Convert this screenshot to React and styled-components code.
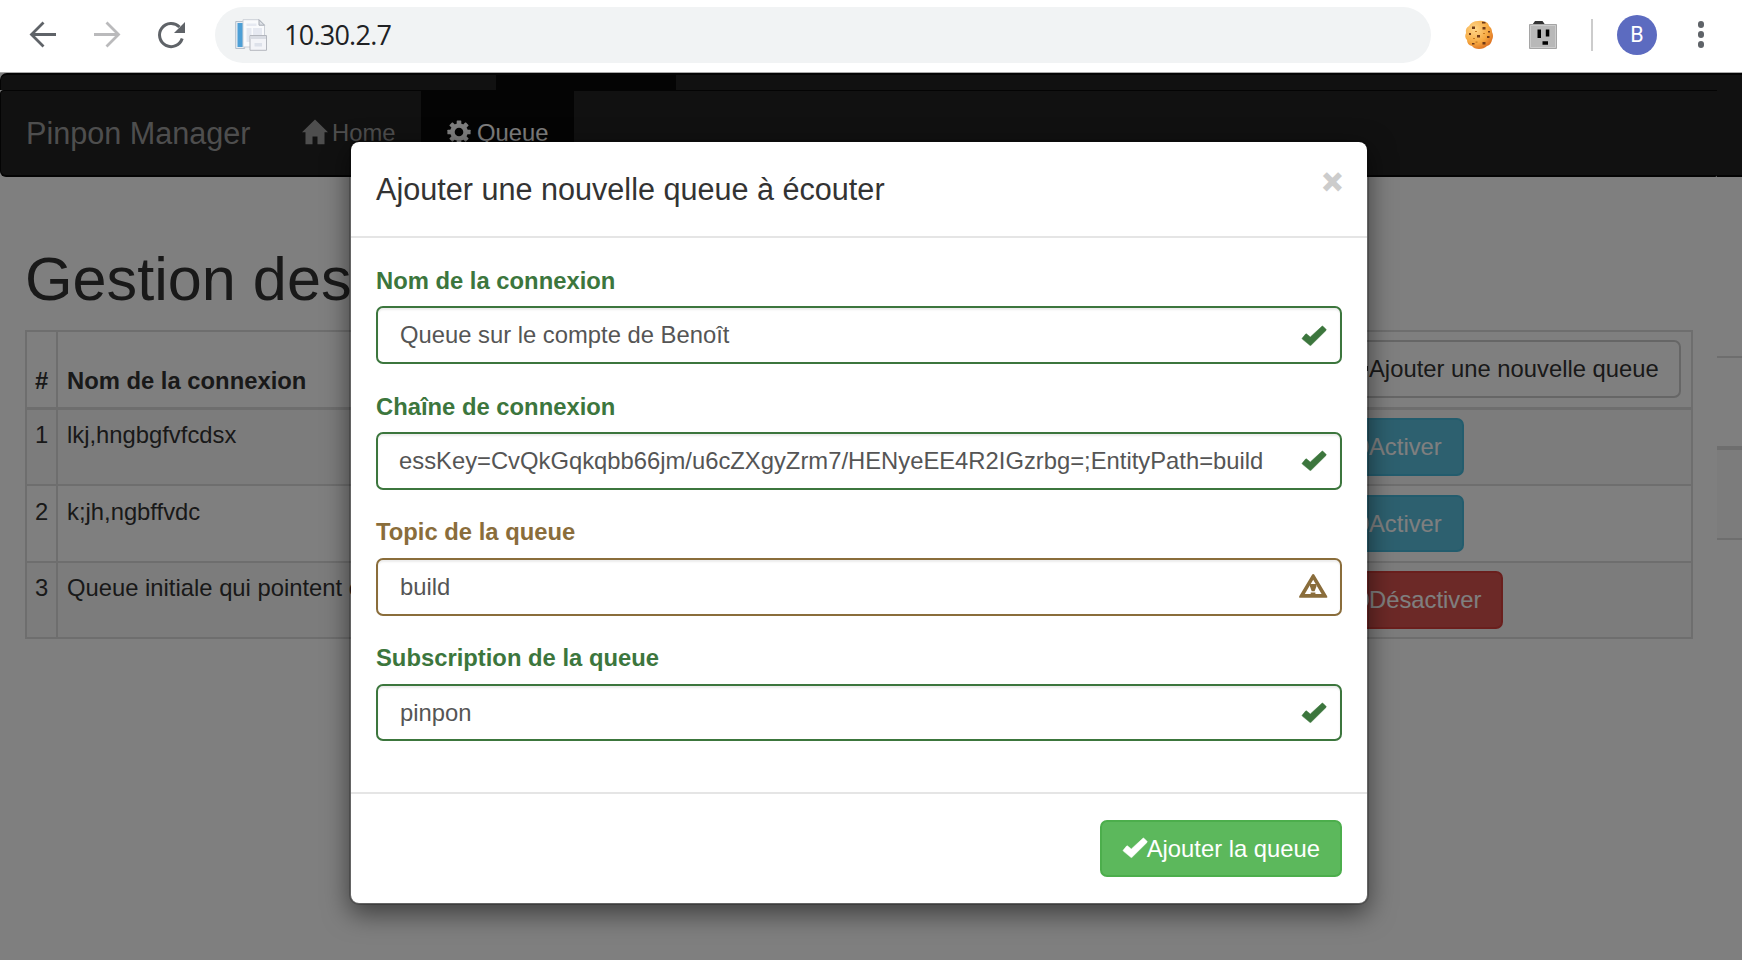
import React from "react";
import styled, { createGlobalStyle } from "styled-components";

const GlobalStyle = createGlobalStyle`
  *, *::before, *::after { box-sizing: border-box; }
  body {
    margin: 0;
    overflow: hidden;
    background: #fff;
    color: #333;
    font-family: "Liberation Sans", Arial, sans-serif;
    font-size: 23.8px;
    line-height: 34px;
  }
`;

/* ---------- browser toolbar ---------- */
const Window = styled.div`
  width: 1742px;
  height: 960px;
  display: flex;
  flex-direction: column;
  overflow: hidden;
`;
const Toolbar = styled.header`
  height: 73px;
  flex: none;
  display: flex;
  align-items: center;
  padding: 0 36px 3px 28px;
  border-bottom: 1px solid #a9a9a9;
`;
const NavIcon = styled.svg`
  width: 30px;
  height: 30px;
  flex: none;
  margin-right: 34px;
  color: ${(p) => (p.$muted ? "#bababc" : "#5f6368")};
`;
const AddressBar = styled.div`
  width: 1216px;
  height: 56px;
  margin-left: -5px;
  border-radius: 28px;
  background: #f1f3f4;
  display: flex;
  align-items: center;
  padding-left: 20px;
`;
const Favicon = styled.svg`
  width: 32px;
  height: 32px;
  margin-right: 17px;
`;
const Url = styled.span`
  font-family: "Open Sans", sans-serif;
  font-size: 27px;
  letter-spacing: -0.75px;
  color: #202124;
`;
const Extension = styled.svg`
  width: 30px;
  height: 30px;
  flex: none;
  margin-left: ${(p) => p.$gap}px;
`;
const Divider = styled.span`
  width: 2px;
  height: 32px;
  margin: 0 24px 0 33px;
  background: #ccc;
`;
const Avatar = styled.span`
  width: 40px;
  height: 40px;
  border-radius: 50%;
  background: #5c6bc0;
  color: #fff;
  display: flex;
  align-items: center;
  justify-content: center;
  font-family: Roboto, sans-serif;
  font-size: 21.5px;
`;
const Dots = styled.div`
  margin-left: auto;
  width: 10px;
  display: flex;
  flex-direction: column;
  align-items: center;
  gap: 3.6px;
  i { width: 6.4px; height: 6.4px; border-radius: 50%; background: #5f6368; }
`;

/* ---------- page ---------- */
const Viewport = styled.main`
  position: relative;
  flex: 1;
  display: flex;
  flex-direction: column;
`;
const TopStrip = styled.div`
  height: 17px;
  flex: none;
  display: flex;
  background: #222;
  border-top: 2px solid #080808;
  border-left: 1px solid #080808;
  border-radius: 7px 0 0 0;
  padding-left: 495px;
`;
const StripActive = styled.span`
  width: 180px;
  background: #080808;
`;
const Columns = styled.div`
  flex: 1;
  display: flex;
`;
const Main = styled.div`
  width: 1717px;
`;
const Aside = styled.div`
  flex: 1;
`;
const Navbar = styled.nav`
  height: 87px;
  display: flex;
  background: #222;
  border: 1px solid #080808;
  border-width: 1px 0 2px 1px;
  border-radius: 4px 0 2px 6px;
  color: #9d9d9d;
  padding-left: 25px;
`;
const Brand = styled.span`
  width: 250px;
  font-size: 30.6px;
  line-height: 84px;
`;
const NavItem = styled.a`
  width: ${(p) => p.$width}px;
  height: 84px;
  padding-left: ${(p) => p.$inset}px;
  display: flex;
  align-items: center;
  gap: ${(p) => p.$gap}px;
  background: ${(p) => (p.$active ? "#080808" : "transparent")};
  color: ${(p) => (p.$active ? "#fff" : "#9d9d9d")};
`;
const Glyph = styled.svg`
  width: 24px;
  height: 24px;
  flex: none;
  overflow: visible;
  fill: currentColor;
`;
const Content = styled.section`
  padding: 69px 24px 0 25px;
`;
const Heading = styled.h1`
  margin: 0 0 17px;
  font-size: 61.2px;
  font-weight: normal;
  line-height: 67px;
`;
const Table = styled.div`
  border: 2px solid #ddd;
`;
const Row = styled.div`
  display: grid;
  grid-template-columns: 31px 1256px 1fr;
  height: ${(p) => p.$height}px;
  background: ${(p) => (p.$striped ? "#f9f9f9" : "#fff")};
  border-bottom: ${(p) => p.$rule}px solid #ddd;
  font-weight: ${(p) => (p.$head ? "bold" : "normal")};
`;
const Cell = styled.div`
  padding: ${(p) => p.$top || 8}px 9px ${(p) => (p.$bottom ? 9 : 8)}px;
  white-space: nowrap;
  border-right: ${(p) => (p.$last ? 0 : 2)}px solid #ddd;
  align-self: stretch;
  display: flex;
  align-items: ${(p) => (p.$bottom ? "flex-end" : "flex-start")};
  &:first-child { padding-left: 8px; }
`;
const palettes = {
  default: ["#fff", "#ccc", "#333"],
  info: ["#5bc0de", "#46b8da", "#fff"],
  danger: ["#d9534f", "#d43f3a", "#fff"],
  success: ["#5cb85c", "#4cae4c", "#fff"],
};
const Button = styled.button`
  height: ${(p) => p.$height || 58}px;
  margin: 0;
  padding: 0 20px;
  display: flex;
  align-items: center;
  border: 2px solid ${(p) => palettes[p.$kind][1]};
  border-radius: 7px;
  background: ${(p) => palettes[p.$kind][0]};
  color: ${(p) => palettes[p.$kind][2]};
  font: inherit;
  font-weight: normal;
  white-space: nowrap;
`;
const AsideNav = styled.div`
  height: 87px;
  background: #222;
  border-bottom: 2px solid #080808;
`;
const AsideHead = styled.div`
  height: 92px;
  margin-top: 179px;
  border-top: 2px solid #ddd;
`;
const AsideRow = styled.div`
  height: 94px;
  margin-top: -2px;
  background: #f9f9f9;
  border-top: 4px solid #ddd;
  border-bottom: 2px solid #ddd;
`;
const Backdrop = styled.div`
  position: absolute;
  inset: 0;
  padding: 67px 0 0 349px;
  background: rgba(0, 0, 0, 0.5);
`;

/* ---------- modal ---------- */
const Dialog = styled.div`
  width: 1020px;
  height: 765px;
  display: flex;
  flex-direction: column;
  border: 2px solid rgba(0, 0, 0, 0.2);
  border-radius: 10px;
  background: #fff;
  background-clip: padding-box;
  box-shadow: 0 8.5px 25.5px rgba(0, 0, 0, 0.5);
`;
const DialogHeader = styled.div`
  height: 96px;
  display: flex;
  justify-content: space-between;
  padding: 25px 25px 0;
  border-bottom: 2px solid #e5e5e5;
`;
const Title = styled.h4`
  margin: 0;
  font-size: 30.6px;
  font-weight: normal;
  line-height: 44px;
`;
const Close = styled.span`
  font-size: 33px;
  font-weight: bold;
  line-height: 29px;
  color: #ccc;
  -webkit-text-stroke: 1.8px #ccc;
`;
const DialogBody = styled.div`
  flex: 1;
  padding: 26px 25px 0;
`;
const tones = { success: "#3c763d", warning: "#8a6d3b" };
const Label = styled.label`
  display: block;
  margin-bottom: 8px;
  font-weight: bold;
`;
const Control = styled.div`
  height: 58px;
  display: flex;
  align-items: center;
  justify-content: space-between;
  padding: 0 14px 0 ${(p) => p.$inset}px;
  border: 2px solid currentColor;
  border-radius: 7px;
  box-shadow: inset 0 2px 2px rgba(0, 0, 0, 0.075);
`;
const Field = styled.div`
  margin-bottom: 26px;
  color: ${(p) => tones[p.$tone]};
  &:nth-child(n + 3) { margin-top: -1px; }
  &:nth-child(n + 3) ${Label} { margin-bottom: 9px; }
  &:first-child ${Glyph} { margin-top: 2px; }
  &:last-child ${Control} { height: 57px; }
`;
const Value = styled.span`
  color: #555;
  white-space: nowrap;
`;
const DialogFooter = styled.div`
  height: 111px;
  display: flex;
  justify-content: flex-end;
  align-items: flex-start;
  padding: 26px 25px 0;
  border-top: 2px solid #e5e5e5;
  ${Glyph} { margin: -2px 0 0 1px; }
`;

const Check = () => (
  <Glyph viewBox="0 0 24 24">
    <path d="M.3 14.100 3.600 10.100q.5-.6 1.100-.1L8.300 13 19.900 2.300q.6-.5 1.100 0l3 3q.5.6 0 1.100L9 21.300q-.6.5-1.200 0L.3 15.100q-.5-.5 0-1z" stroke="currentColor" strokeWidth=".5" />
  </Glyph>
);
const Warning = () => (
  <Glyph viewBox="0 0 24 24">
    <g transform="translate(-.8 -.8)">
      <path
        fillRule="evenodd"
        d="M12-.3q.7 0 1 .7L26 22q.6 1.500-.7 1.500H-1.300Q-2.600 23.500-2 22L11 .4q.3-.7 1-.7zM12 5.500 3.600 19.800h5.900v-1.600h4.700v1.600h6.200z"
      />
      <path d="M8.800 9.800h6.400v2.500L13.400 17h-2.900L8.800 12.300z" />
    </g>
  </Glyph>
);
const House = () => (
  <Glyph viewBox="0 0 24 24">
    <path d="M12-1.500 25 11.300H21.500V23.300H14.500V15.500H9.500V23.300H2.500V11.300H-1z" />
  </Glyph>
);
const Cog = () => (
  <Glyph viewBox="0 0 24 24">
    <mask id="hub" maskUnits="userSpaceOnUse" x="-2" y="-2" width="28" height="28">
      <rect x="-2" y="-2" width="28" height="28" fill="#fff" />
      <circle cx="12" cy="11" r="4.300" fill="#000" />
    </mask>
    <g mask="url(#hub)">
      <circle cx="12" cy="11" r="8.800" />
      {[0, 45, 90, 135].map((a) => (
        <rect key={a} x="9.700" y="-.6" width="4.600" height="23.200" rx=".6" transform={`rotate(${a} 12 11)`} />
      ))}
    </g>
  </Glyph>
);
const Ring = () => (
  <Glyph viewBox="0 0 24 24">
    <circle cx="11.700" cy="11.500" r="10.600" fill="none" stroke="currentColor" strokeWidth="3" />
  </Glyph>
);
const Plus = () => (
  <Glyph viewBox="0 0 24 24">
    <path d="M9 2h5v7h9v5h-9v8H9v-8H1V9h8z" />
  </Glyph>
);

const rows = [
  { id: 1, name: "lkj,hngbgfvfcdsx", action: "Activer", kind: "info", height: 76, rule: 2, top: 8 },
  { id: 2, name: "k;jh,ngbffvdc", action: "Activer", kind: "info", height: 77, rule: 2, top: 9, button: 57 },
  { id: 3, name: "Queue initiale qui pointent c", action: "Désactiver", kind: "danger", height: 74, rule: 0, top: 8 },
];
const fields = [
  { label: "Nom de la connexion", value: "Queue sur le compte de Benoît", tone: "success" },
  {
    label: "Chaîne de connexion",
    value: "essKey=CvQkGqkqbb66jm/u6cZXgyZrm7/HENyeEE4R2IGzrbg=;EntityPath=build",
    tone: "success",
  },
  { label: "Topic de la queue", value: "build", tone: "warning" },
  { label: "Subscription de la queue", value: "pinpon", tone: "success" },
];

function BrowserToolbar() {
  return (
    <Toolbar>
      <NavIcon viewBox="0 0 30 30" fill="none" stroke="currentColor" strokeWidth="2.8">
        <path d="M28 14.500H4M15.500 2.500l-12 12 12 12" />
      </NavIcon>
      <NavIcon $muted viewBox="0 0 30 30" fill="none" stroke="currentColor" strokeWidth="2.8">
        <path d="M2 14.500h24M14.500 2.500l12 12-12 12" />
      </NavIcon>
      <NavIcon viewBox="0 0 30 30" fill="none" stroke="currentColor" strokeWidth="3">
        <path d="M26.200 18.500A11.600 11.600 0 1 1 23.500 7" />
        <path d="M29 2v11H18z" fill="currentColor" stroke="none" />
      </NavIcon>
      <AddressBar>
        <Favicon viewBox="0 0 32 32">
          <path d="M.7 2.500h9v27h-9z" fill="#e8edf3" stroke="#b4bfcb" />
          <path d="M2.500 4h5.500v24H2.500z" fill="#4d9fd6" />
          <path d="M8 .7h16l5.500 5.500V28H8z" fill="#f9fafc" stroke="#ccd0d7" />
          <path d="M24 .7v5.500h5.500z" fill="#dfe2e8" stroke="#a5aab2" />
          <path d="M11.500 9h5v14h-5zM11.500 4.500h10V7h-10zM18 9h9v7h-9z" fill="#e6e9f1" />
          <path d="M15 16.500h16.500v14.800H15z" fill="#f3f4f8" stroke="#b3b6bd" />
          <path d="M15.500 17h15.500v3H15.500z" fill="#d9dce3" />
          <path d="M19.500 24h7.500v3.500h-7.500z" fill="#dde1ea" />
        </Favicon>
        <Url>10.30.2.7</Url>
      </AddressBar>
      <Extension $gap={33} viewBox="0 0 30 30">
        <defs>
          <radialGradient id="biscuit" cx=".35" cy=".3" r=".8">
            <stop offset="0" stopColor="#ffd68a" />
            <stop offset=".6" stopColor="#f6a941" />
            <stop offset="1" stopColor="#d9661a" />
          </radialGradient>
        </defs>
        <path d="M14 1q4-1 7 1 3 0 4 4 3 2 3 6 2 4 0 8-1 5-5 6-3 3-8 3-5 0-7-3-5-1-5-6-3-3-1-7-1-5 3-7 3-5 9-5z" fill="url(#biscuit)" />
        <path d="M8 6.500h3v2.500H8zM18.500 7h3v2.500h-3zM13 15h3v2.500h-3zM5 13h2v2H5zM23 16h2.500v2H23zM18.500 22h3v2.500h-3zM8 23h2.500v1.500H8zM18 1.800h3.500v1.700H18zM24 11h2v1.500h-2z" fill="#713a16" />
        <path d="M11 11h2v1h-2zM19 13h2v1h-2zM9 18h2v1H9zM11.500 21.500h2v1.200h-2z" fill="#c57720" />
      </Extension>
      <Extension $gap={34} viewBox="0 0 30 30">
        <path d="M4.500 4.500 7 .9h7.500l2.500 3.600z" fill="#333" />
        <path d="M1.500 4.500h27v24h-27z" fill="#b8b8b8" stroke="#a5a5a5" />
        <path d="M2.500 5.500h25v22h-25z" fill="none" stroke="#d0d0d0" strokeWidth=".8" />
        <path d="M9.500 9.500H13v8.500H9.500zM17.800 9.500h3.500v7h-3.500zM14.500 21.300h5.500v3.400h-5.500z" fill="#000" />
      </Extension>
      <Divider />
      <Avatar>B</Avatar>
      <Dots><i /><i /><i /></Dots>
    </Toolbar>
  );
}

function QueueTable() {
  return (
    <Table>
      <Row $head $height={78} $rule={3}>
        <Cell $bottom>#</Cell>
        <Cell $bottom>Nom de la connexion</Cell>
        <Cell $last>
          <Button $kind="default"><Plus />Ajouter une nouvelle queue</Button>
        </Cell>
      </Row>
      {rows.map((r) => (
        <Row key={r.id} $height={r.height} $rule={r.rule} $striped={r.id % 2 === 1}>
          <Cell $top={r.top}>{r.id}</Cell>
          <Cell $top={r.top}>{r.name}</Cell>
          <Cell $top={r.top} $last>
            <Button $kind={r.kind} $height={r.button}><Ring />{r.action}</Button>
          </Cell>
        </Row>
      ))}
    </Table>
  );
}

function AddQueueDialog() {
  return (
    <Dialog role="dialog">
      <DialogHeader>
        <Title>Ajouter une nouvelle queue à écouter</Title>
        <Close>×</Close>
      </DialogHeader>
      <DialogBody>
        {fields.map((f) => (
          <Field key={f.label} $tone={f.tone}>
            <Label>{f.label}</Label>
            <Control $inset={f.value.length > 40 ? 21 : 22}>
              <Value>{f.value}</Value>
              {f.tone === "success" ? <Check /> : <Warning />}
            </Control>
          </Field>
        ))}
      </DialogBody>
      <DialogFooter>
        <Button $kind="success" $height={57}><Check />Ajouter la queue</Button>
      </DialogFooter>
    </Dialog>
  );
}

export default function App() {
  return (
    <Window>
      <GlobalStyle />
      <BrowserToolbar />
      <Viewport>
        <TopStrip><StripActive /></TopStrip>
        <Columns>
          <Main>
            <Navbar>
              <Brand>Pinpon Manager</Brand>
              <NavItem $width={145} $inset={27} $gap={5}><House />Home</NavItem>
              <NavItem $width={153} $inset={26} $gap={6} $active><Cog />Queue</NavItem>
            </Navbar>
            <Content>
              <Heading>Gestion des</Heading>
              <QueueTable />
            </Content>
          </Main>
          <Aside>
            <AsideNav />
            <AsideHead />
            <AsideRow />
          </Aside>
        </Columns>
        <Backdrop><AddQueueDialog /></Backdrop>
      </Viewport>
    </Window>
  );
}
